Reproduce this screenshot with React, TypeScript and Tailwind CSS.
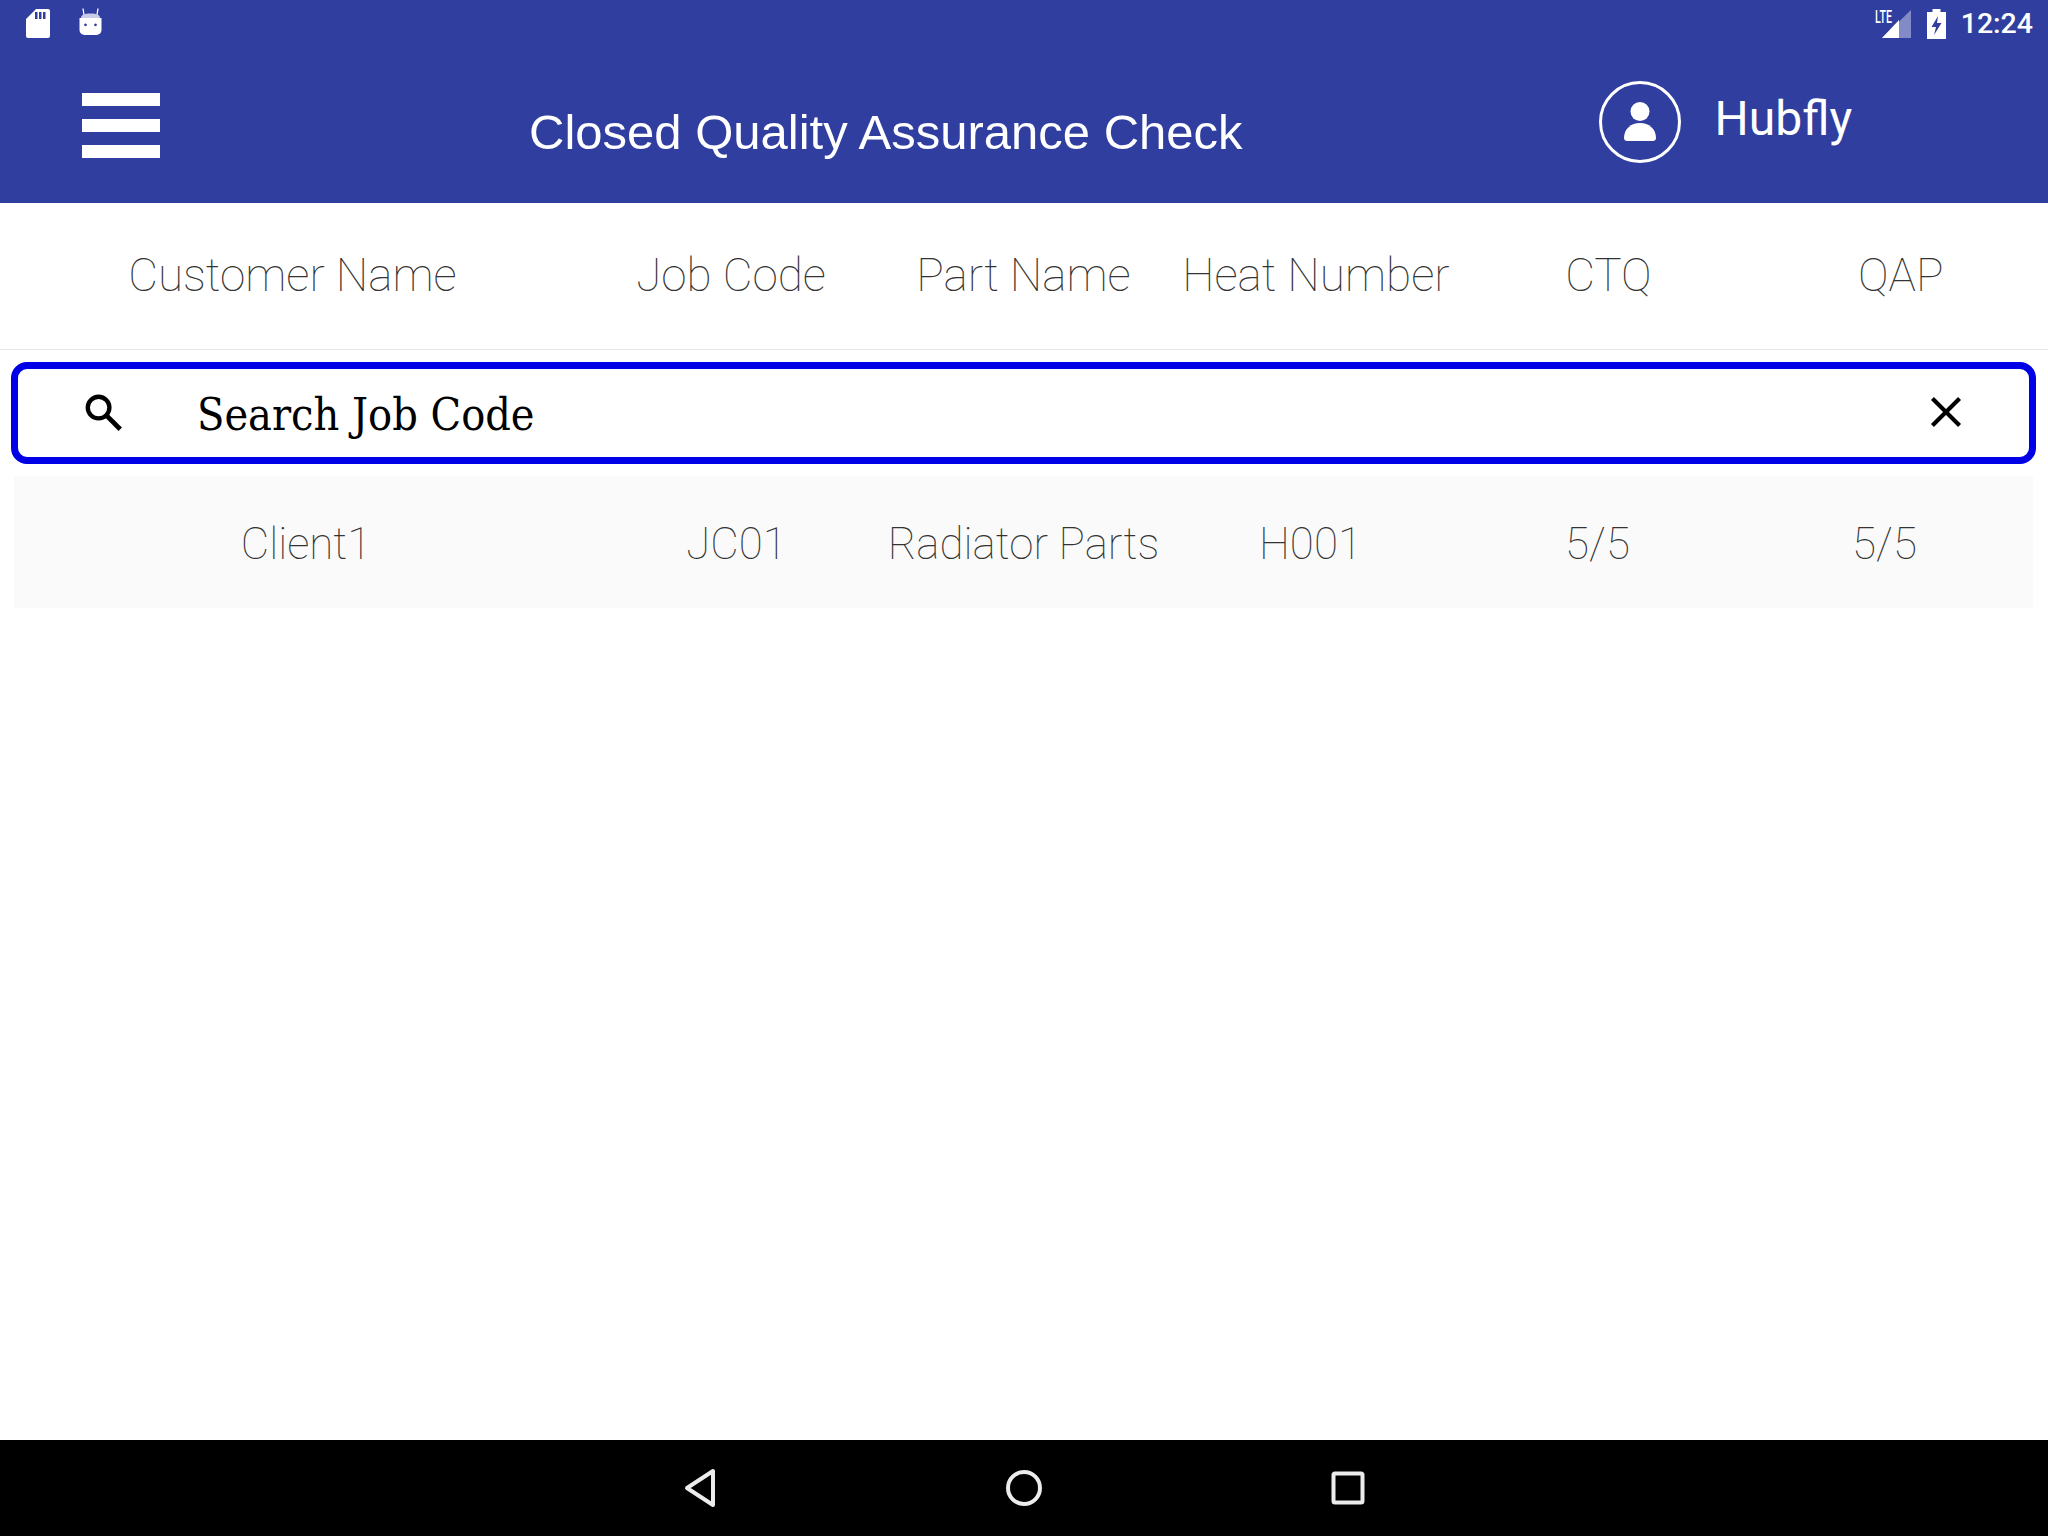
import React from "react";

const cols = ["Customer Name", "Job Code", "Part Name", "Heat Number", "CTQ", "QAP"];
const row = ["Client1", "JC01", "Radiator Parts", "H001", "5/5", "5/5"];

function SdIcon() {
  return (
    <svg width="24" height="29" viewBox="0 0 24 29" className="ml-[26px] mt-[9px] shrink-0">
      <path fillRule="evenodd" fill="#fff" d="M10 0h12a2 2 0 0 1 2 2v25a2 2 0 0 1-2 2H2a2 2 0 0 1-2-2V10z M9 3v7h2.500V3z M13 3v7h2.500V3z M17 3v7h2.500V3z" />
    </svg>
  );
}

function BotIcon() {
  return (
    <svg width="23" height="28" viewBox="0 0 23 28" className="ml-[29px] mt-[8px] shrink-0">
      <path d="M4 0.500L5 7M19 0.500L18 7" stroke="#fff" strokeWidth="1.300" />
      <path fill="#c9cde6" d="M2 10c0-3 3-4.500 9.500-4.500s9.500 1.500 9.500 4.500z" />
      <path fill="#fff" fillRule="evenodd" d="M0.500 10h22v12a5 5 0 0 1-5 5h-12a5 5 0 0 1-5-5z M6.500 15.500a1.400 1.400 0 1 0 .01 0z M16.500 15.500a1.400 1.400 0 1 0 .01 0z" />
    </svg>
  );
}

function Cell({ text }: { text: string }) {
  return <div className="text-center whitespace-nowrap text-[#333333]">{text}</div>;
}

export default function App() {
  return (
    <div className="w-[2048px] h-[1536px] flex flex-col bg-white overflow-hidden font-['Roboto',sans-serif]">
      <header className="h-[203px] shrink-0 bg-[#303f9f] text-white">
        <div className="h-[48px] flex items-start">
          <SdIcon />
          <BotIcon />
          <div className="ml-auto flex items-start">
            <svg width="36" height="39" viewBox="0 0 36 39" className="shrink-0">
              <path d="M36 10V38H7z" fill="#fff" fillOpacity="0.4" />
              <path d="M24 20V38H7z" fill="#fff" />
              <text x="0" y="23" fontSize="18" fontWeight="500" fill="#fff" fontFamily="Roboto" textLength="17" lengthAdjust="spacingAndGlyphs">LTE</text>
            </svg>
            <svg width="19" height="30" viewBox="0 0 19 30" className="ml-[16px] mt-[9px] shrink-0">
              <path fill="#fff" fillRule="evenodd" d="M5.500 0h8v3H19v27H0V3h5.500z M11 7L4.500 18h4.500l-2 8 7.500-12H10z" />
            </svg>
            <span className="ml-[15px] mr-[15px] mt-[5px] text-[28.5px] leading-[38px] font-medium">12:24</span>
          </div>
        </div>
        <div className="flex items-start">
          <div className="ml-[82px] mt-[45px] w-[78px] flex flex-col gap-[13px] shrink-0">
            <div className="h-[13px] bg-white" />
            <div className="h-[13px] bg-white" />
            <div className="h-[13px] bg-white" />
          </div>
          <h1 className="ml-[369px] mt-[54px] font-['Liberation_Sans',sans-serif] font-normal text-[49px] leading-[60px] whitespace-nowrap">
            Closed Quality Assurance Check
          </h1>
          <div className="ml-[356px] mt-[33px] w-[82px] h-[82px] rounded-full border-[3px] border-white flex flex-col items-center justify-center shrink-0">
            <svg width="34" height="40" viewBox="0 0 34 40">
              <circle cx="17" cy="9.500" r="9.500" fill="#fff" />
              <path fill="#fff" d="M1 36C1 27 8 21 17 21s16 6 16 15c0 2-1.500 3-3 3H4c-1.500 0-3-1-3-3z" />
            </svg>
          </div>
          <span className="ml-[34px] mt-[41px] text-[48px] leading-[60px] whitespace-nowrap">Hubfly</span>
        </div>
      </header>

      <div className="h-[147px] shrink-0 grid grid-cols-[2fr_1fr_1fr_1fr_1fr_1fr] items-center border-b border-[#e6e6e6] font-thin text-[45.900px] pb-[1px] pr-[1px]">
        {cols.map((c) => (
          <Cell key={c} text={c} />
        ))}
      </div>

      <div className="ml-[11px] mr-[12px] mt-[12px] h-[102px] rounded-[16px] border-[7px] border-[#0000e6] flex items-center">
        <svg width="52" height="52" viewBox="0 0 24 24" className="ml-[60px] -mt-[1px] shrink-0">
          <circle cx="9.500" cy="9.500" r="5" fill="none" stroke="#000" strokeWidth="2" />
          <path d="M13.200 13.200L19.500 19.500" stroke="#000" strokeWidth="2.200" />
        </svg>
        <span className="ml-[67px] mt-[3px] font-['DejaVu_Serif_Condensed','DejaVu_Serif',serif] text-[44.500px] leading-[60px] text-black whitespace-nowrap">Search Job Code</span>
        <svg width="50" height="50" viewBox="0 0 24 24" className="ml-auto mr-[58px] -mt-[2px] shrink-0">
          <path d="M5.500 5.500L18.500 18.500M18.500 5.500L5.500 18.500" stroke="#000" strokeWidth="2" />
        </svg>
      </div>

      <div className="ml-[14px] mr-[15px] mt-[12px] h-[132px] shrink-0 bg-[#fafafa] px-[5px] grid grid-cols-[2fr_1fr_1fr_1fr_1fr_1fr] items-center font-thin text-[43.900px] pt-[5px]">
        {row.map((c, i) => (
          <Cell key={i} text={c} />
        ))}
      </div>

      <div className="flex-1" />

      <nav className="h-[96px] shrink-0 bg-black flex items-center justify-center gap-[284px]">
        <svg width="40" height="48" viewBox="0 0 40 48">
          <path d="M33 7V41L7 24z" fill="none" stroke="#ececec" strokeWidth="4" strokeLinejoin="round" />
        </svg>
        <svg width="40" height="48" viewBox="0 0 40 48">
          <circle cx="20" cy="24" r="16" fill="none" stroke="#ececec" strokeWidth="4" />
        </svg>
        <svg width="40" height="48" viewBox="0 0 40 48">
          <rect x="5.500" y="9.500" width="29" height="29" rx="1.500" fill="none" stroke="#ececec" strokeWidth="4" />
        </svg>
      </nav>
    </div>
  );
}
